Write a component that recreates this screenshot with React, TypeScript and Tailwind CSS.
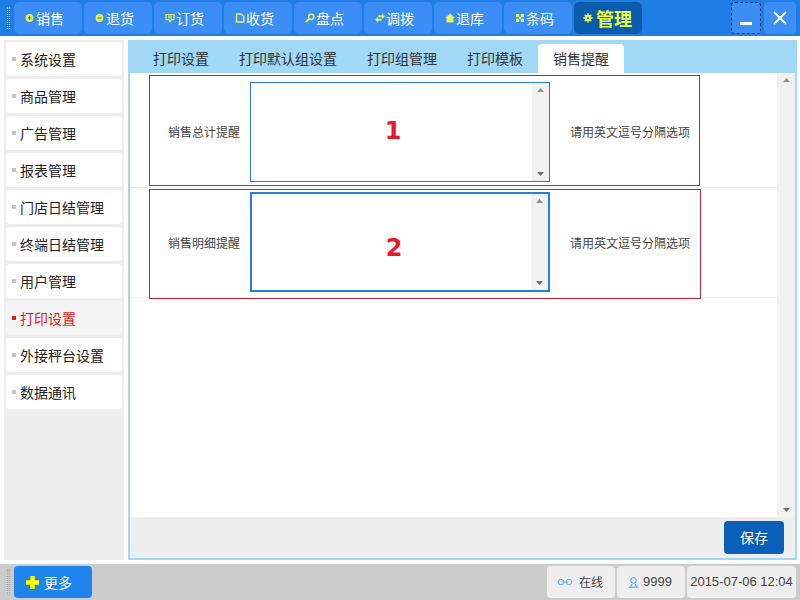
import React from "react";

const Y = "#e6f25a";
const icons: Record<string, React.ReactNode> = {
  plus: <><circle cx="4.500" cy="5" r="3.900" fill={Y} /><path d="M2.700 5h3.600M4.500 3.200v3.600" stroke="#3b7a70" strokeWidth="1.100" /></>,
  minus: <><circle cx="4.500" cy="5" r="3.900" fill={Y} /><path d="M2.500 5h4" stroke="#3b7a70" strokeWidth="1.100" /></>,
  chat: <path d="M1 1.500h8v5.200h-2.500l-1.500 2-1-2h-3zM3 3.200h4M3 5h4" fill="none" stroke={Y} strokeWidth="1.200" />,
  doc: <path d="M1.500 1h4.500l2.800 2.500v5.500h-7.300z" fill="none" stroke={Y} strokeWidth="1.400" />,
  key: <><circle cx="6.200" cy="3.800" r="2.600" fill="none" stroke={Y} strokeWidth="1.500" /><path d="M4.400 5.600l-3.800 3.600" stroke={Y} strokeWidth="1.800" /></>,
  swap: <path d="M3.500 2.300h3.500V0.500l3 2.800-3 2.800V4.300H3.500zM6.500 5.700H3V4L0 6.700l3 2.800V7.700h3.500z" fill={Y} />,
  home: <path d="M5 0.500l5 4.500h-1.500v4.500h-7v-4.500h-1.500z" fill={Y} />,
  qr: <path d="M1 1h3.200v3.200h-3.200zM5.800 1h3.200v3.200h-3.200zM1 5.800h3.200v3.200h-3.200zM5.800 5.800h3.200v3.200h-3.200zM4 4h2v2h-2z" fill={Y} />,
  gear: <><circle cx="5" cy="5" r="3.200" fill={Y} /><path d="M5 0.300v9.400M0.300 5h9.400M1.700 1.700l6.600 6.600M8.300 1.700l-6.600 6.600" stroke={Y} strokeWidth="1.400" /><circle cx="5" cy="5" r="0.900" fill="#0b5cad" /></>,
};

const navs = [
  ["plus", "销售"], ["minus", "退货"], ["chat", "订货"], ["doc", "收货"], ["key", "盘点"],
  ["swap", "调拨"], ["home", "退库"], ["qr", "条码"],
];
const side = ["系统设置", "商品管理", "广告管理", "报表管理", "门店日结管理", "终端日结管理", "用户管理", "打印设置", "外接秤台设置", "数据通讯"];
const tabs = ["打印设置", "打印默认组设置", "打印组管理", "打印模板", "销售提醒"];

function Ico({ n }: { n: string }) {
  return <svg width="10" height="10" viewBox="0 0 10 10" className="shrink-0">{icons[n]}</svg>;
}

function Bar({ className = "" }: { className?: string }) {
  return (
    <div className={`flex flex-col items-center justify-between bg-[#f1f1f1] py-[5px] ${className}`}>
      <svg width="7" height="4" viewBox="0 0 7 4"><path d="M3.500 0l3.500 4h-7z" fill="#8f8f8f" /></svg>
      <svg width="7" height="4" viewBox="0 0 7 4"><path d="M3.500 4l3.500-4h-7z" fill="#6f6f6f" /></svg>
    </div>
  );
}

function Row({ label, num, focus, h, boxClass, textTop, numClass }: { label: string; num: string; focus?: boolean; h: string; boxClass: string; textTop: string; numClass: string }) {
  return (
    <div className={`relative flex items-start border-b border-[#eeeeee] ${h}`}>
      <div className={`w-[110px] text-right text-[12px] leading-[20px] text-[#444444] ${textTop}`}>{label}</div>
      <div className={`ml-[10px] flex h-[100px] w-[300px] ${focus ? "mt-[4px] border-2 border-[#2480d8]" : "mt-[9px] border border-[#2b7fc4]"}`}>
        <div className={`flex flex-1 items-center justify-center font-['DejaVu_Sans'] text-[24px] font-bold text-[#e8192c] ${numClass}`}>{num}</div>
        <Bar className="w-[17px]" />
      </div>
      <div className={`ml-[20px] text-[12px] leading-[20px] text-[#444444] ${textTop}`}>请用英文逗号分隔选项</div>
      <div className={`pointer-events-none absolute border border-[#b82a3a] ${boxClass}`} />
    </div>
  );
}

export default function App() {
  return (
    <div className="flex h-[600px] w-[800px] flex-col overflow-hidden bg-white font-['Noto_Sans_CJK_SC','Liberation_Sans',sans-serif]">
      <header className="flex h-[36px] items-center bg-[#1f7de6] pr-[4px]">
        <div className="ml-[7px] mr-[4px] h-[22px] w-[3px] border-x border-dotted border-[#8fc0f5]" />
        <nav className="flex gap-[2px]">
          {navs.map(([i, t]) => (
            <div key={t} className="flex h-[32px] w-[68px] items-center rounded-[5px] bg-[#3b8ef5] pl-[11px] text-[14px] text-white">
              <Ico n={i} />
              <span className="ml-[1px]">{t}</span>
            </div>
          ))}
          <div className="flex h-[32px] w-[68px] items-center rounded-[5px] bg-[#0b5cad] pl-[9px] text-[18px] font-bold text-[#f0ff3c]">
            <Ico n="gear" />
            <span className="ml-[3px]">管理</span>
          </div>
        </nav>
        <div className="ml-auto flex h-[32px] w-[30px] items-end justify-center rounded-[4px] border border-dashed border-[#123a78] bg-[#3b8ef5] pb-[8px]">
          <div className="h-[3px] w-[12px] bg-white" />
        </div>
        <div className="ml-[3px] flex h-[32px] w-[32px] items-center justify-center rounded-[4px] bg-[#3b8ef5]">
          <svg width="14" height="14" viewBox="0 0 14 14"><path d="M1 1l12 12M13 1l-12 12" stroke="#fff" strokeWidth="1.800" /></svg>
        </div>
      </header>

      <main className="flex h-[524px] gap-[4px] pl-[4px] pt-[4px]">
        <aside className="flex h-[520px] w-[120px] flex-col gap-[3px] bg-[#eeeeee] px-[2px] pt-[2px]">
          {side.map((s, i) => {
            const on = i === 7;
            return (
              <div key={s} className={`flex h-[34px] items-center rounded-[4px] pl-[6px] text-[14px] ${on ? "bg-[#f4f4f4] text-[#e01b1b]" : "bg-white text-[#222222]"}`}>
                <span className={`mr-[4px] h-[4px] w-[4px] ${on ? "bg-[#e01b1b]" : "bg-[#c4c4c4]"}`} />
                {s}
              </div>
            );
          })}
        </aside>

        <section className="flex h-[520px] w-[669px] flex-col border-2 border-[#a0d8f5] bg-white">
          <div className="flex h-[31px] items-end bg-[#a0d8f5] pl-[8px]">
            {tabs.map((t, i) => (
              <div key={t} className={`flex h-[29px] items-center rounded-t-[4px] px-[15px] text-[14px] ${i === 4 ? "bg-white" : ""} text-[#333333]`}>{t}</div>
            ))}
          </div>
          <div className="flex h-[444px]">
            <div className="flex-1">
              <Row label="销售总计提醒" num="1" h="h-[115px]" textTop="pt-[49px]" numClass="pl-[3px] pb-[2px]" boxClass="left-[19px] top-[2px] h-[111px] w-[551px]" />
              <Row label="销售明细提醒" num="2" focus h="h-[110px]" textTop="pt-[45px]" numClass="pl-[5px] pt-[12px]" boxClass="left-[19px] top-[1px] h-[110px] w-[552px]" />
            </div>
            <Bar className="w-[18px]" />
          </div>
          <div className="flex h-[41px] items-start justify-end bg-[#eeeeee] pr-[11px] pt-[4px]">
            <button className="h-[33px] w-[60px] rounded-[4px] bg-[#0a5fb8] text-[14px] text-white">保存</button>
          </div>
        </section>
      </main>

      <footer className="mt-[4px] flex h-[36px] flex-1 items-center bg-[#cccccc] pr-[4px]">
        <div className="ml-[7px] mr-[4px] h-[26px] w-[3px] border-x border-dotted border-[#a8a8a8]" />
        <button className="flex h-[32px] w-[78px] items-center rounded-[4px] bg-[#1f84ee] pl-[12px] text-[14px] text-white">
          <svg width="13" height="13" viewBox="0 0 13 13"><path d="M6.500 0v13M0 6.500h13" stroke="#ffff00" strokeWidth="4.500" /></svg>
          <span className="ml-[5px]">更多</span>
        </button>
        <div className="ml-auto flex gap-[2px] text-[12px] text-[#444444]">
          <div className="flex h-[32px] w-[68px] items-center rounded-[4px] bg-[#eeeeee] pl-[10px]">
            <svg width="16" height="8" viewBox="0 0 16 8"><g fill="none" stroke="#6ba6e6" strokeWidth="1"><circle cx="4" cy="4" r="2.800" /><circle cx="12" cy="4" r="2.800" /><path d="M5 4h6" /></g></svg>
            <span className="ml-[6px]">在线</span>
          </div>
          <div className="flex h-[32px] w-[68px] items-center rounded-[4px] bg-[#eeeeee] pl-[11px]">
            <svg width="11" height="11" viewBox="0 0 11 11"><g fill="none" stroke="#4f97e6" strokeWidth="1"><circle cx="5.500" cy="3.500" r="2.800" /><path d="M0.500 10.200h10M2.500 10l1.500-3M8.500 10l-1.500-3" /></g></svg>
            <span className="ml-[4px] font-['Liberation_Sans'] text-[13px]">9999</span>
          </div>
          <div className="flex h-[32px] w-[109px] items-center justify-center rounded-[4px] bg-[#eeeeee] font-['Liberation_Sans'] text-[13px]">2015-07-06 12:04</div>
        </div>
      </footer>
    </div>
  );
}
